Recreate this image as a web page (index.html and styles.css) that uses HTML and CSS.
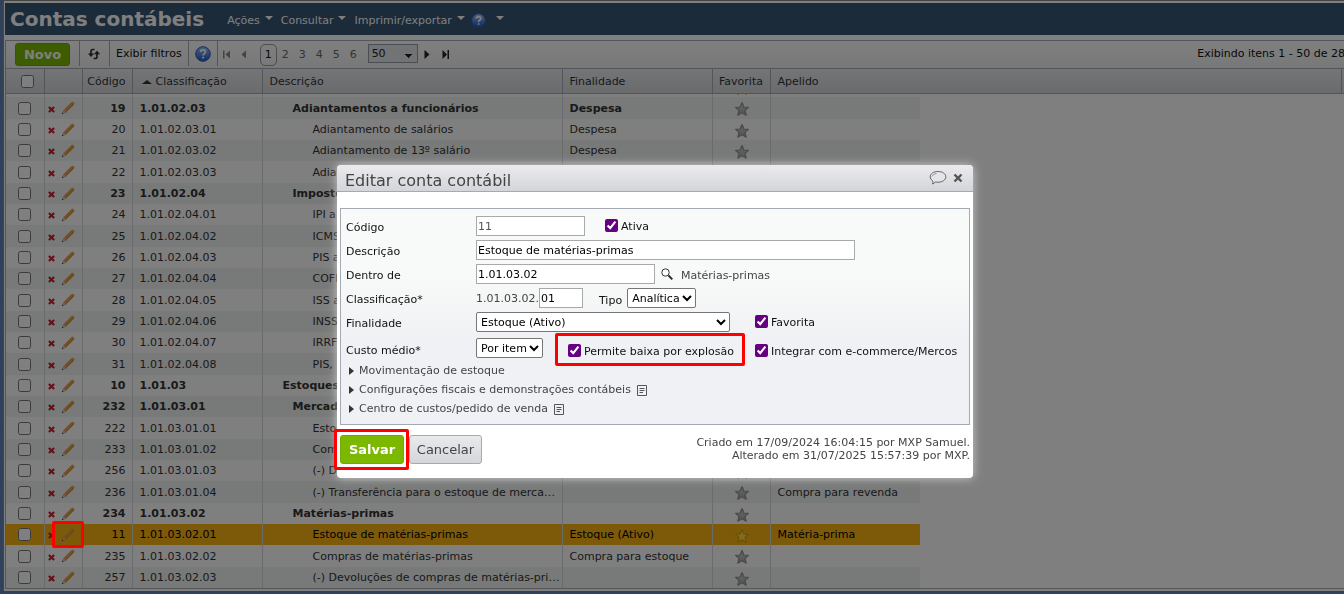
FILE: index.html
```html
<!DOCTYPE html>
<html lang="pt-BR">
<head>
    <meta charset="UTF-8">
    <meta name="viewport" content="width=device-width, initial-scale=1.0">
    <title>Contas contábeis</title>
    <link rel="stylesheet" href="styles.css">
</head>
<body>
    <!-- Shared icons -->
    <svg class="sprite" aria-hidden="true">
        <defs>
            <linearGradient id="blue" x1="0" y1="0" x2="0" y2="1">
                <stop offset="0" stop-color="#9cc4ff"/>
                <stop offset="1" stop-color="#1f56c4"/>
            </linearGradient>
            <linearGradient id="silver" x1="0" y1="0" x2="0" y2="1">
                <stop offset="0" stop-color="#d0d0d0"/>
                <stop offset="1" stop-color="#a4a4a4"/>
            </linearGradient>
        </defs>
        <symbol id="delete" viewBox="0 0 8 8">
            <path d="M1 1.2L7 6.8M7 1.2L1 6.8" stroke="#c8202c" stroke-width="2.5"/>
        </symbol>
        <symbol id="pencil" viewBox="0 0 14 14">
            <path d="M2.8 9.2L10.3 1.6Q11.2 .6 12.2 1.2L12.8 1.8Q13.5 2.8 12.6 3.8L4.9 11.3Z" fill="#f0a040" stroke="#d08c3c" stroke-width=".5"/>
            <path d="M4.2 11L12.6 2.8" stroke="#c87c28" stroke-width=".8"/>
            <path d="M2.8 9.2L4.9 11.3L1 13Z" fill="#f0dcbc" stroke="#a08868" stroke-width=".5"/>
            <path d="M1.5 11.5L2.5 12.4L1 13Z" fill="#333"/>
        </symbol>
        <symbol id="star" viewBox="0 0 16 16">
            <path d="M8 1.6L9.9 6L14.4 6.4L11 9.4L12.2 14.2L8 11.7L3.8 14.2L5 9.4L1.6 6.4L6.1 6Z" stroke-width="1.2" stroke-linejoin="round"/>
        </symbol>
        <symbol id="help" viewBox="0 0 16 16">
            <circle cx="8" cy="8" r="7.3" fill="url(#blue)" stroke="#2a5cb8"/>
            <path d="M5.7 6.1Q5.8 3.8 8.1 3.8Q10.4 3.9 10.4 5.8Q10.4 7 9.2 7.7Q8.1 8.4 8.1 9.6M8.1 10.8V12.6" fill="none" stroke="#fff" stroke-width="1.8"/>
        </symbol>
        <symbol id="note" viewBox="0 0 10 11">
            <path d="M.5 .5H9.5V10.5H.5ZM2.5 3.5H7.5M2.5 5.5H7.5M2.5 7.5H6" fill="none" stroke="#555"/>
        </symbol>
    </svg>

    <div class="window">
        <header class="title-bar">
            <h1>Contas contábeis</h1>
            <nav class="menu">
                <a href="#">Ações <i class="caret"></i></a>
                <a href="#">Consultar <i class="caret"></i></a>
                <a href="#">Imprimir/exportar <i class="caret"></i></a>
                <a href="#" class="menu-help" aria-label="Ajuda"><svg class="icon-help small"><use href="#help"/></svg> <i class="caret"></i></a>
            </nav>
        </header>

        <main class="panel">
            <div class="toolbar">
                <div class="tool first"><button class="btn-new">Novo</button></div>
                <div class="tool refresh">
                    <button class="plain" aria-label="Atualizar">
                        <svg width="14" height="12" viewBox="0 0 14 12"><path d="M7.5 1.5H6Q4 1.5 4 3.2V7" fill="none" stroke="#333" stroke-width="1.7"/><path d="M.8 5.5H7.2L4 9Z" fill="#333"/><path d="M6.5 10.5H8Q10 10.5 10 8.8V5" fill="none" stroke="#333" stroke-width="1.7"/><path d="M6.8 6.2H13.2L10 2.7Z" fill="#333"/></svg>
                    </button>
                </div>
                <div class="tool"><button class="plain">Exibir filtros</button></div>
                <div class="tool"><button class="plain" aria-label="Ajuda"><svg class="icon-help"><use href="#help"/></svg></button></div>
                <div class="pager">
                    <button class="plain" aria-label="Primeira"><svg width="8" height="9" viewBox="0 0 8 9"><path d="M0 .5H1.5V8.5H0ZM7 .5V8.5L2.5 4.5Z" fill="#888"/></svg></button>
                    <button class="plain" aria-label="Anterior"><svg width="6" height="9" viewBox="0 0 6 9"><path d="M5 .5V8.5L.5 4.5Z" fill="#888"/></svg></button>
                    <div class="pages">
                        <a href="#" class="current">1</a>
                        <a href="#">2</a>
                        <a href="#">3</a>
                        <a href="#">4</a>
                        <a href="#">5</a>
                        <a href="#">6</a>
                    </div>
                    <select class="page-size" aria-label="Itens por página">
                        <option>50</option>
                    </select>
                    <button class="plain" aria-label="Próxima"><svg width="6" height="9" viewBox="0 0 6 9"><path d="M.5 0V9L5.5 4.5Z" fill="#222"/></svg></button>
                    <button class="plain" aria-label="Última"><svg width="8" height="9" viewBox="0 0 8 9"><path d="M.5 0V9L5 4.5ZM5.5 0H7V9H5.5Z" fill="#222"/></svg></button>
                </div>
                <div class="count">Exibindo itens 1 - 50 de 284</div>
            </div>

            <table class="grid grid-head">
                <thead>
                    <tr>
                        <th class="c-check"><input type="checkbox" aria-label="Selecionar todos"></th>
                        <th class="c-tools"></th>
                        <th class="c-code">Código</th>
                        <th class="c-class"><i class="sort"></i>Classificação</th>
                        <th class="c-desc">Descrição</th>
                        <th class="c-final">Finalidade</th>
                        <th class="c-fav">Favorita</th>
                        <th>Apelido</th>
                        <th class="c-end"></th>
                    </tr>
                </thead>
            </table>
            <div class="scroll">
                <table class="grid grid-body">
                    <tbody id="rows"></tbody>
                </table>
            </div>
        </main>
    </div>

    <div class="overlay">
        <form class="dialog">
            <div class="dialog-title">
                <h2>Editar conta contábil</h2>
                <button type="button" class="plain" aria-label="Comentários">
                    <svg width="18" height="16" viewBox="0 0 18 16"><path d="M9 1.5C13.5 1.5 16.8 3.8 16.8 6.8C16.8 9.8 13.5 12.2 9 12.2Q7.6 12.2 6.3 11.9Q5.5 13.5 3.5 14Q4.3 12.8 3.8 11Q1.2 9.4 1.2 6.8C1.2 3.8 4.5 1.5 9 1.5Z" fill="#e4e5e8" stroke="#666"/><path d="M3 6.5Q3.8 4 7.5 3.4" fill="none" stroke="#999"/></svg>
                </button>
                <button type="button" class="plain" aria-label="Fechar">
                    <svg width="10" height="10" viewBox="0 0 10 10"><path d="M1.5 1.5L8.5 8.5M8.5 1.5L1.5 8.5" stroke="#555" stroke-width="2.4"/></svg>
                </button>
            </div>

            <div class="fields">
                <div class="field">
                    <label class="name" for="codigo">Código</label>
                    <input type="text" id="codigo" class="w-code" value="11" readonly>
                    <label class="check ativa"><input type="checkbox" checked>Ativa</label>
                </div>
                <div class="field">
                    <label class="name" for="descricao">Descrição</label>
                    <input type="text" id="descricao" class="w-desc" value="Estoque de matérias-primas">
                </div>
                <div class="field">
                    <label class="name" for="dentro">Dentro de</label>
                    <input type="text" id="dentro" class="w-parent" value="1.01.03.02">
                    <button type="button" class="plain search" aria-label="Pesquisar">
                        <svg width="12" height="12" viewBox="0 0 12 12"><circle cx="4.5" cy="4.5" r="3.7" fill="#fff" stroke="#333"/><path d="M7.5 7.5L11.3 11.3" stroke="#222" stroke-width="1.8"/></svg>
                    </button>
                    <span class="hint">Matérias-primas</span>
                </div>
                <div class="field">
                    <label class="name" for="classificacao">Classificação*</label>
                    <span class="prefix">1.01.03.02.</span>
                    <input type="text" id="classificacao" class="w-class" value="01">
                    <label class="tipo" for="tipo">Tipo</label>
                    <select id="tipo" class="w-type"><option>Analítica</option></select>
                </div>
                <div class="field">
                    <label class="name" for="finalidade">Finalidade</label>
                    <select id="finalidade" class="w-final"><option>Estoque (Ativo)</option></select>
                    <label class="check favorita"><input type="checkbox" checked>Favorita</label>
                </div>
                <div class="field cost">
                    <label class="name" for="custo">Custo médio*</label>
                    <select id="custo" class="w-cost"><option>Por item</option></select>
                    <label class="check marked explosao"><input type="checkbox" checked>Permite baixa por explosão</label>
                    <label class="check"><input type="checkbox" checked>Integrar com e-commerce/Mercos</label>
                </div>
                <div class="sections">
                    <button type="button" class="plain"><i class="arrow"></i>Movimentação de estoque</button>
                    <button type="button" class="plain"><i class="arrow"></i>Configurações fiscais e demonstrações contábeis<svg class="icon-note"><use href="#note"/></svg></button>
                    <button type="button" class="plain"><i class="arrow"></i>Centro de custos/pedido de venda<svg class="icon-note"><use href="#note"/></svg></button>
                </div>
            </div>

            <div class="dialog-foot">
                <span class="marked save"><button type="button" class="btn-save">Salvar</button></span>
                <button type="button" class="btn-cancel">Cancelar</button>
                <p class="audit">Criado em 17/09/2024 16:04:15 por MXP Samuel.<br>Alterado em 31/07/2025 15:57:39 por MXP.</p>
            </div>
        </form>
    </div>

    <script src="rows.js"></script>
</body>
</html>
```
FILE: styles.css
```css
* {
    box-sizing: border-box;
}
body {
    margin: 0;
    height: 100vh;
    overflow: hidden;
    background: #6483b4;
    font-family: "DejaVu Sans", Verdana, sans-serif;
    font-size: 11px;
    color: #333;
}
h1, h2, p {
    margin: 0;
}
a {
    color: inherit;
    text-decoration: none;
}
input, select, button {
    font: inherit;
    margin: 0;
}
.plain {
    display: flex;
    align-items: center;
    padding: 0;
    border: none;
    background: none;
    color: inherit;
}
.sprite {
    position: absolute;
    width: 0;
    height: 0;
}

/* Window */
.window {
    display: flex;
    flex-direction: column;
    height: calc(100vh - 3px);
    margin-left: 3px;
    padding: 2px 0 2px 1px;
    border-left: 1px solid #888;
    border-top: 1px solid #888;
    background: #fff;
}
.title-bar {
    display: flex;
    align-items: center;
    height: 32px;
    padding-left: 5px;
    background: #365672;
    color: #fff;
}
.title-bar h1 {
    font-size: 20px;
}
.menu {
    display: flex;
    align-items: center;
    gap: 8px;
    margin-left: 23px;
    padding-top: 2px;
}
.menu a {
    display: flex;
    align-items: center;
    gap: 5px;
}
.menu-help {
    margin-left: -2px;
}
.menu-help .caret {
    margin-left: 5px;
}
.caret {
    margin-bottom: 4px;
    border: 4px solid transparent;
    border-top-color: #fff;
    border-bottom: none;
}
.icon-help {
    width: 16px;
    height: 16px;
}
.icon-help.small {
    width: 15px;
    height: 15px;
}

/* Toolbar */
.panel {
    display: flex;
    flex: 1;
    flex-direction: column;
    min-height: 0;
    margin-top: 5px;
    border: 1px solid #a4aab3;
    border-right: none;
}
.toolbar {
    display: flex;
    flex: none;
    height: 27px;
    background: linear-gradient(#fff, #f0f1f1);
    color: #111;
}
.tool {
    display: flex;
    align-items: center;
    height: 25px;
    padding: 0 6px;
    border-right: 1px solid #a4aab3;
}
.tool.first {
    padding: 2px 9px 0;
}
.tool.refresh {
    padding: 0 8px 0 7px;
}
.btn-new {
    width: 55px;
    height: 23px;
    padding: 0;
    border: 1px solid #72a800;
    border-radius: 3px;
    background: #7db800;
    color: #fff;
    font-size: 13px;
    font-weight: bold;
}
.pager {
    display: flex;
    align-items: center;
    gap: 8px;
    padding-left: 5px;
}
.pager > .plain {
    width: 10px;
}
.pages {
    display: flex;
    align-items: center;
    margin-left: 1px;
}
.pages a {
    width: 17px;
    line-height: 20px;
    border: 1px solid transparent;
    text-align: center;
    color: #666;
}
.pages .current {
    border-color: #949aa4;
    border-radius: 5px;
    color: #111;
}
.page-size {
    width: 50px;
    height: 19px;
    margin: 0 -2px 3px;
    padding: 0 3px;
    border: 1px solid #949aa4;
    border-radius: 0;
    appearance: none;
    /* the two gradients form the down arrow */
    background:
        linear-gradient(45deg, transparent 50%, #222 50%) 36px 9px / 4px 4px no-repeat,
        linear-gradient(-45deg, transparent 50%, #222 50%) 40px 9px / 4px 4px no-repeat,
        #e4e6ea;
    color: #222;
}
.count {
    flex: none;
    margin-left: auto;
    margin-right: -8px;
    line-height: 26px;
    white-space: nowrap;
}

/* Grid */
.grid {
    flex: none;
    table-layout: fixed;
    border-collapse: collapse;
}
.grid-head {
    width: 100%;
    border-top: 1px solid #a4aab3;
    border-bottom: 1px solid #a4aab3;
    background: linear-gradient(#e8eaee, #d4d6da);
}
.grid th {
    height: 25px;
    padding: 0 7px;
    border-right: 1px solid #a4aab3;
    text-align: left;
    font-weight: normal;
}
.grid .c-check { width: 38px; text-align: center; }
.grid .c-tools { width: 38px; padding: 0; }
.grid .c-code { width: 50px; padding: 0 6px 0 0; text-align: right; }
.grid .c-class { width: 130px; padding-right: 0; }
.grid .c-desc { width: 300px; padding-right: 2px; }
.grid .c-final { width: 150px; }
.grid .c-fav { width: 58px; padding: 0; text-align: center; }
.grid .c-nick { width: 150px; border-right: none; }
.grid .c-end { width: 3px; padding: 0; border: none; }
.grid input {
    display: block;
    width: 13px;
    height: 13px;
}
.grid th input {
    margin-left: 8px;
}
.sort {
    display: inline-block;
    margin: 0 4px 1px 2px;
    border: 5px solid transparent;
    border-top: none;
    border-bottom: 4px solid #333;
}
.scroll {
    display: flex;
    flex: 1;
    flex-direction: column;
    justify-content: flex-end;
    min-height: 0;
    overflow: hidden;
}
.grid-body {
    width: 914px;
}
.grid td {
    height: 21px;
    padding: 0 7px;
    border-right: 1px solid #d4d7db;
    overflow: hidden;
    white-space: nowrap;
    text-overflow: ellipsis;
}
.grid tr:nth-child(3n+2) td {
    height: 22px;
}
.grid-body tr:nth-child(even) {
    background: #eff4f2;
}
.grid-body .group {
    font-weight: bold;
}
.grid-body tr.selected:nth-child(n) {
    background: #f9b412;
    color: #000;
}
.grid td.c-check {
    padding-left: 12px;
}
.grid td.c-fav {
    padding: 2px 0 0 1px;
}
.grid td.level-1 { padding-left: 20px; }
.grid td.level-2 { padding-left: 30px; }
.grid td.level-3 { padding-left: 50px; }
.row-tools {
    display: flex;
    align-items: center;
    gap: 6px;
    padding-left: 3px;
}
.row-tools svg {
    display: block;
}
.icon-delete {
    width: 7px;
    height: 7px;
    margin-top: 2px;
}
.icon-pencil {
    width: 14px;
    height: 14px;
}
.icon-star {
    display: block;
    width: 16px;
    height: 16px;
    margin: 0 auto;
    fill: url(#silver);
    stroke: #929292;
}
.icon-star.on {
    fill: #ffd94a;
    stroke: #dba000;
}
.pencil-mark {
    position: absolute;
    z-index: 2;
    width: 32px;
    height: 27px;
    margin: -7px 0 0 -9px;
    border: 3px solid #f00;
    border-radius: 2px;
}

/* Dialog */
.overlay {
    position: fixed;
    inset: 0;
    display: flex;
    justify-content: center;
    align-items: flex-start;
    padding: 165px 34px 0 0;
    background: rgba(0, 0, 0, 0.5);
}
.dialog {
    width: 636px;
    border-radius: 4px;
    background: #fff;
    box-shadow: 0 0 10px rgba(255, 255, 255, 0.6);
    color: #111;
}
.dialog-title {
    display: flex;
    align-items: center;
    gap: 6px;
    height: 27px;
    padding: 0 10px 0 8px;
    border-bottom: 1px solid #a4aab3;
    border-radius: 4px 4px 0 0;
    background: linear-gradient(#ebebed, #d3d5da);
}
.dialog-title h2 {
    flex: 1;
    padding-top: 5px;
    font-size: 16px;
    font-weight: normal;
    color: #444;
}
.fields {
    margin: 16px 3px 0;
    padding: 5px 5px 6px;
    border: 1px solid #a4aab3;
    background: linear-gradient(#f8faf9 30%, #f0f1f4 60%);
}
.field {
    display: flex;
    align-items: center;
    height: 24px;
}
.field .name {
    width: 130px;
    padding-top: 2px;
}
.field input[type="text"] {
    height: 20px;
    padding: 0 1px;
    border: 1px solid #a9a9a9;
    background: #fff;
    color: #000;
}
.field input[readonly] {
    color: #555;
}
.field select {
    height: 20px;
    padding: 0;
    border: 1px solid #767676;
    border-radius: 2px;
    background: #fff;
    color: #000;
}
.field .w-code { width: 109px; }
.field .w-desc { width: 379px; }
.field .w-parent { width: 179px; }
.field .w-class { width: 44px; }
.w-type { width: 69px; }
.w-final { width: 254px; }
.w-cost { width: 67px; }
.hint, .prefix {
    color: #444;
}
.hint {
    padding-top: 2px;
}
.search {
    margin: 0 8px 0 6px;
}
.tipo {
    margin: 0 5px 0 16px;
    padding-top: 4px;
}
.check {
    display: flex;
    align-items: center;
    gap: 3px;
    padding-top: 2px;
    line-height: 16px;
}
.check input {
    width: 13px;
    height: 13px;
    margin-bottom: 3px;
    accent-color: #660080;
}
.ativa { margin-left: 20px; }
.favorita { margin-left: 25px; }
.marked {
    border: 3px solid #f00;
    border-radius: 2px;
}
.field.cost {
    height: 28px;
    margin-bottom: -1px;
}
.cost .name {
    padding-top: 4px;
}
.cost .check {
    padding-top: 8px;
}
.cost .explosao {
    width: 190px;
    height: 33px;
    margin: 2px 10px 0 12px;
    padding: 6px 0 0 10px;
    white-space: nowrap;
}
.sections {
    display: flex;
    flex-direction: column;
    padding-left: 3px;
    color: #444;
}
.sections .plain {
    height: 19px;
}
.arrow {
    margin-right: 5px;
    border: 4px solid transparent;
    border-left: 5px solid #333;
    border-right: none;
}
.icon-note {
    width: 10px;
    height: 11px;
    margin: 2px 0 0 6px;
}
.dialog-foot {
    display: flex;
    align-items: flex-start;
    margin-left: -3px;
    padding: 4px 3px 8px 0;
}
.save {
    display: flex;
    padding: 3px 2px 3px 3px;
}
.btn-save, .btn-cancel {
    height: 29px;
    padding: 0;
    border-radius: 3px;
    font-size: 13px;
}
.btn-save {
    width: 64px;
    border: 1px solid #72a800;
    background: #7db800;
    color: #fff;
    font-weight: bold;
}
.btn-cancel {
    width: 73px;
    margin-top: 6px;
    border: 1px solid #a4aab3;
    background: linear-gradient(#e8eaec, #d4d6da);
    color: #444;
}
.audit {
    margin-left: auto;
    padding-top: 7px;
    line-height: 13px;
    text-align: right;
    color: #444;
}
```
FILE: rows.js
```js
// code, classification, level, description, purpose, nickname, favourite
const accounts = [
    ['18', '1.01.02.02.09', 3, '', '', '', true],
    ['19', '1.01.02.03', 2, 'Adiantamentos a funcionários', 'Despesa', ''],
    ['20', '1.01.02.03.01', 3, 'Adiantamento de salários', 'Despesa', ''],
    ['21', '1.01.02.03.02', 3, 'Adiantamento de 13º salário', 'Despesa', ''],
    ['22', '1.01.02.03.03', 3, 'Adiantamento', '', ''],
    ['23', '1.01.02.04', 2, 'Impostos', '', ''],
    ['24', '1.01.02.04.01', 3, 'IPI a', '', ''],
    ['25', '1.01.02.04.02', 3, 'ICMS', '', ''],
    ['26', '1.01.02.04.03', 3, 'PIS a', '', ''],
    ['27', '1.01.02.04.04', 3, 'COFINS', '', ''],
    ['28', '1.01.02.04.05', 3, 'ISS a', '', ''],
    ['29', '1.01.02.04.06', 3, 'INSS', '', ''],
    ['30', '1.01.02.04.07', 3, 'IRRF', '', ''],
    ['31', '1.01.02.04.08', 3, 'PIS,', '', ''],
    ['10', '1.01.03', 1, 'Estoques', '', ''],
    ['232', '1.01.03.01', 2, 'Mercadorias', '', ''],
    ['222', '1.01.03.01.01', 3, 'Estoque', '', ''],
    ['233', '1.01.03.01.02', 3, 'Compras', '', ''],
    ['256', '1.01.03.01.03', 3, '(-) Devoluções', '', ''],
    ['236', '1.01.03.01.04', 3, '(-) Transferência para o estoque de mercadorias', '', 'Compra para revenda'],
    ['234', '1.01.03.02', 2, 'Matérias-primas', '', ''],
    ['11', '1.01.03.02.01', 3, 'Estoque de matérias-primas', 'Estoque (Ativo)', 'Matéria-prima', true],
    ['235', '1.01.03.02.02', 3, 'Compras de matérias-primas', 'Compra para estoque', ''],
    ['257', '1.01.03.02.03', 3, '(-) Devoluções de compras de matérias-primas', '', '']
];

document.getElementById('rows').innerHTML = accounts.map(([code, cls, level, desc, purpose, nick, fav]) => {
    const selected = code === '11';
    return `<tr class="${level < 3 ? 'group' : ''} ${selected ? 'selected' : ''}">
        <td class="c-check"><input type="checkbox" aria-label="Selecionar ${code}"></td>
        <td class="c-tools"><div class="row-tools">
            <svg class="icon-delete"><use href="#delete"/></svg>
            <svg class="icon-pencil" ${selected ? 'id="editing"' : ''}><use href="#pencil"/></svg>
        </div></td>
        <td class="c-code">${code}</td>
        <td class="c-class">${cls}</td>
        <td class="c-desc level-${level}">${desc}</td>
        <td class="c-final">${purpose}</td>
        <td class="c-fav"><svg class="icon-star ${fav ? 'on' : ''}"><use href="#star"/></svg></td>
        <td class="c-nick">${nick}</td>
    </tr>`;
}).join('');

// Highlight the pencil of the row being edited, above the overlay
const pencil = document.getElementById('editing').getBoundingClientRect();
const mark = document.createElement('div');
mark.className = 'pencil-mark';
mark.style.left = pencil.left + 'px';
mark.style.top = pencil.top + 'px';
document.body.appendChild(mark);
```
